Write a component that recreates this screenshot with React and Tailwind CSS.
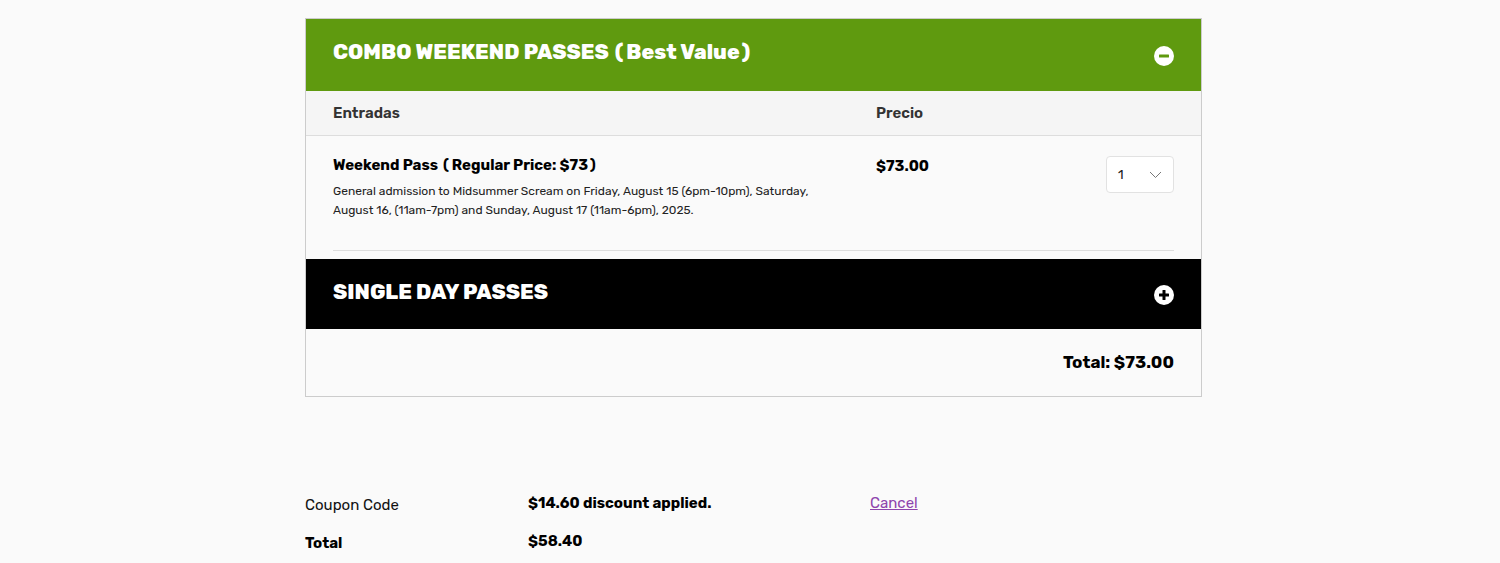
import React from 'react';

const font = { fontFamily: 'Rubik, Inter, "Noto Sans", sans-serif' };

function CircleIcon({ minus, bar }) {
  return (
    <svg width="20" height="20" viewBox="0 0 20 20">
      <circle cx="10" cy="10" r="10" fill="#fff" />
      <rect x="5" y="8.5" width="10" height="3" rx="0.5" fill={bar} />
      {!minus && <rect x="8.5" y="5" width="3" height="10" rx="0.5" fill={bar} />}
    </svg>
  );
}

export default function App() {
  return (
    <div className="min-h-[563px] bg-[#fafafa] pt-[18px] text-black" style={font}>
      <div className="ml-[305px] w-[897px]">
        <div className="border border-[#cccccc] bg-[#fafafa]">
          {/* Combo header */}
          <div className="h-[72px] bg-[#5f9a0f] px-[27px] flex justify-between">
            <h2 className="pt-[17px] text-[21px] font-extrabold text-white">
              COMBO WEEKEND PASSES<span className="ml-[6px] mr-[3px]">(</span>Best Value<span className="ml-[2px]">)</span>
            </h2>
            <div className="pt-[27px]">
              <CircleIcon minus bar="#5f9a0f" />
            </div>
          </div>

          {/* Column header */}
          <div className="h-[45px] bg-[#f5f5f5] border-b border-[#dddddd] flex items-center text-[15px] font-semibold text-[#333]">
            <div className="pl-[27px] w-[570px]">Entradas</div>
            <div>Precio</div>
          </div>

          {/* Ticket row */}
          <div className="px-[27px]">
            <div className="flex pt-[18px] pb-[30px] border-b border-[#dddddd]">
              <div className="w-[543px]">
                <div className="text-[15px] font-bold">
                  Weekend Pass<span className="ml-[5px] mr-[3px]">(</span>Regular Price: $73<span className="ml-[2px]">)</span>
                </div>
                <p className="mt-[5px] w-[500px] text-[12px] leading-[19px] text-[#222]">
                  General admission to Midsummer Scream on Friday, August 15 (6pm-10pm), Saturday, August 16, (11am-7pm) and Sunday, August 17 (11am-6pm), 2025.
                </p>
              </div>
              <div className="flex-1 text-[15px] font-bold pt-[1px]">$73.00</div>
              <div className="mt-[2px] w-[68px] h-[37px] border border-[#e2e2e2] rounded bg-white flex items-center justify-between px-[11px] text-[13px] text-[#222]">
                <span>1</span>
                <svg width="13" height="8" viewBox="0 0 13 8" fill="none">
                  <path d="M1 1l5.5 5.5L12 1" stroke="#777" strokeWidth="1" />
                </svg>
              </div>
            </div>
          </div>

          {/* Single day header */}
          <div className="mt-[8px] h-[70px] bg-black px-[27px] flex justify-between">
            <h2 className="pt-[17px] text-[21px] font-extrabold text-white">SINGLE DAY PASSES</h2>
            <div className="pt-[26px]">
              <CircleIcon bar="#000" />
            </div>
          </div>

          {/* Total */}
          <div className="h-[67px] flex items-center justify-end pr-[27px] pt-[2px] text-[17px] font-bold">
            Total: $73.00
          </div>
        </div>

        {/* Coupon */}
        <div className="mt-[92px] text-[15px]">
          <div className="flex items-center h-[30px]">
            <div className="w-[223px] pt-[4px] text-[#111]">Coupon Code</div>
            <div className="w-[342px] font-bold">$14.60 discount applied.</div>
            <a href="#" className="text-[#8e44ad] underline">Cancel</a>
          </div>
          <div className="flex items-center h-[30px] mt-[8px]">
            <div className="w-[223px] pt-[4px] font-bold">Total</div>
            <div className="font-bold">$58.40</div>
          </div>
        </div>
      </div>
    </div>
  );
}
